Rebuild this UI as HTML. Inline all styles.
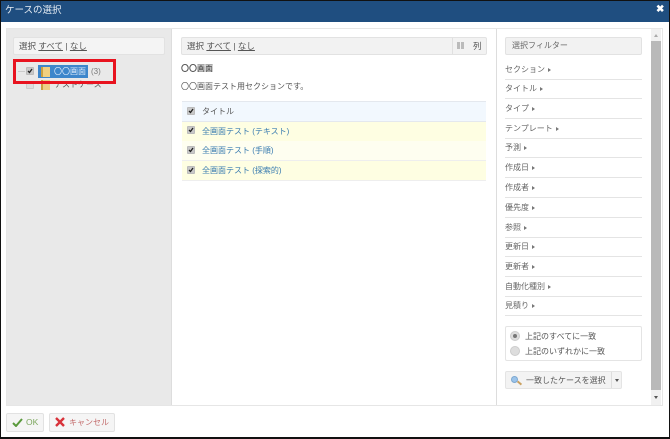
<!DOCTYPE html>
<html><head><meta charset="utf-8"><style>
*{box-sizing:border-box}
html,body{margin:0;padding:0;width:670px;height:439px;overflow:hidden;background:#fff}
body{font-family:"Liberation Sans","Noto Sans CJK JP",sans-serif;font-size:8px;color:#555;position:relative}
.a{position:absolute;white-space:nowrap}
.u{text-decoration:underline}
.bar{position:absolute;background:#f2f2f2;border:1px solid #e2e2e2;border-radius:2px;height:18px;line-height:16px;padding-left:5px;font-size:8.5px}
.cb{position:absolute;width:8px;height:8px;background:#c8c8c8;border:1px solid #bbb;border-radius:1px}
.cb svg{position:absolute;left:0;top:0;display:block}
.row{position:absolute;left:182px;width:304px;height:20px;border-bottom:1px solid #eee;line-height:20px;padding-left:20px}
.row .cb{left:5px;top:5px}
.lk{color:#3a7cb0}
.f{position:absolute;left:505px;width:137px;height:20px;border-bottom:1px solid #e4e4e4;line-height:19px;color:#666}
.f i{display:inline-block;width:0;height:0;border-left:3px solid #777;border-top:2.5px solid transparent;border-bottom:2.5px solid transparent;margin-left:3px;vertical-align:0}
</style></head><body>
<div class="a" style="left:0;top:0;width:670px;height:22px;background:#1f4e80"></div>
<div class="a" style="left:5px;top:4px;color:#e6edf4;font-size:9.5px;line-height:13px">ケースの選択</div>
<div class="a" style="left:656px;top:3px;color:#fff;font-size:10px;font-weight:bold;line-height:13px">✖</div>

<div class="a" style="left:6px;top:28px;width:657px;height:378px;border:1px solid #e6e6e6;background:#fff"></div>
<div class="a" style="left:7px;top:29px;width:165px;height:376px;background:#e9e9e9;border-right:1px solid #ddd"></div>
<div class="a" style="left:496px;top:29px;width:1px;height:376px;background:#ddd"></div>

<div class="bar" style="left:13px;top:37px;width:152px;background:#f4f4f4">選択 <span class="u">すべて</span> | <span class="u">なし</span></div>
<div class="a" style="left:18px;top:71px;width:7px;height:1px;background:#ccc"></div>
<div class="cb" style="left:26px;top:67px"><svg width="6" height="6" viewBox="0 0 6 6"><path d="M1 3l1.5 1.5L5 1" stroke="#222" stroke-width="1.3" fill="none"/></svg></div>
<div class="cb" style="left:26px;top:81px;background:#ddd;border-color:#ccc"></div>
<div class="a" style="left:38px;top:65px;width:50px;height:13px;background:#3d86cb"></div>
<div class="a" style="left:41px;top:67px;width:9px;height:10px;background:#f0d080;border-left:2px solid #caa040"></div>
<div class="a" style="left:54px;top:65px;color:#dbeafa;line-height:14px">〇〇画面</div>
<div class="a" style="left:91px;top:65px;color:#777;line-height:14px">(3)</div>
<div class="a" style="left:41px;top:80px;width:9px;height:10px;background:#edcf85;border-left:2px solid #caa040"></div>
<div class="a" style="left:54px;top:78px;line-height:14px">テストケース</div>
<div class="a" style="left:13px;top:59px;width:103px;height:25px;border:3px solid #e8131f"></div>

<div class="bar" style="left:181px;top:37px;width:306px">選択 <span class="u">すべて</span> | <span class="u">なし</span></div>
<div class="a" style="left:452px;top:38px;width:1px;height:16px;background:#e0e0e0"></div>
<div class="a" style="left:457px;top:42px;width:7px;height:7px;background:repeating-linear-gradient(90deg,#bbb 0 3px,#f2f2f2 3px 4px)"></div>
<div class="a" style="left:473px;top:38px;line-height:16px;font-size:8.5px">列</div>
<div class="a" style="left:181px;top:62px;line-height:14px;font-weight:bold;color:#555">〇〇画面</div>
<div class="a" style="left:181px;top:80px;line-height:14px">〇〇画面テスト用セクションです。</div>

<div class="row" style="top:101px;background:#f2f8fe;border-top:1px solid #e4e8ee;border-bottom:1px solid #e4e8ee;height:21px"><span class="cb"><svg width="6" height="6" viewBox="0 0 6 6"><path d="M1 3l1.5 1.5L5 1" stroke="#222" stroke-width="1.3" fill="none"/></svg></span>タイトル</div>
<div class="row lk" style="top:122px;background:#fefee2"><span class="cb" style="top:4px"><svg width="6" height="6" viewBox="0 0 6 6"><path d="M1 3l1.5 1.5L5 1" stroke="#222" stroke-width="1.3" fill="none"/></svg></span>全画面テスト (テキスト)</div>
<div class="row lk" style="top:141px;background:#fefef0"><span class="cb"><svg width="6" height="6" viewBox="0 0 6 6"><path d="M1 3l1.5 1.5L5 1" stroke="#222" stroke-width="1.3" fill="none"/></svg></span>全画面テスト (手順)</div>
<div class="row lk" style="top:161px;background:#fefee2"><span class="cb"><svg width="6" height="6" viewBox="0 0 6 6"><path d="M1 3l1.5 1.5L5 1" stroke="#222" stroke-width="1.3" fill="none"/></svg></span>全画面テスト (探索的)</div>

<div class="bar" style="left:505px;top:37px;width:137px;padding-left:6px;color:#666;font-size:8px">選択フィルター</div>
<div class="f" style="top:60px">セクション<i></i></div>
<div class="f" style="top:79px">タイトル<i></i></div>
<div class="f" style="top:99px">タイプ<i></i></div>
<div class="f" style="top:119px">テンプレート<i></i></div>
<div class="f" style="top:138px">予測<i></i></div>
<div class="f" style="top:158px">作成日<i></i></div>
<div class="f" style="top:178px">作成者<i></i></div>
<div class="f" style="top:198px">優先度<i></i></div>
<div class="f" style="top:218px">参照<i></i></div>
<div class="f" style="top:237px">更新日<i></i></div>
<div class="f" style="top:257px">更新者<i></i></div>
<div class="f" style="top:277px">自動化種別<i></i></div>
<div class="f" style="top:296px">見積り<i></i></div>

<div class="a" style="left:505px;top:326px;width:137px;height:35px;border:1px solid #e4e4e4;border-radius:2px"></div>
<div class="a" style="left:511px;top:332px;width:8px;height:8px;border-radius:50%;background:#777;border:2px solid #ddd;box-shadow:0 0 0 1px #ccc"></div>
<div class="a" style="left:511px;top:347px;width:8px;height:8px;border-radius:50%;background:#ddd;box-shadow:0 0 0 1px #ccc"></div>
<div class="a" style="left:525px;top:330px;line-height:13px">上記のすべてに一致</div>
<div class="a" style="left:525px;top:345px;line-height:13px">上記のいずれかに一致</div>

<div class="a" style="left:505px;top:371px;width:117px;height:18px;background:#f3f3f3;border:1px solid #e4e4e4;border-radius:2px"></div>
<div class="a" style="left:611px;top:372px;width:1px;height:16px;background:#ddd"></div>
<div class="a" style="left:511px;top:376px;width:7px;height:7px;border-radius:50%;background:#9cc4ea;border:1px solid #7da8d0"></div>
<div class="a" style="left:517px;top:382px;width:5px;height:2px;background:#c9a060;transform:rotate(40deg)"></div>
<div class="a" style="left:526px;top:374px;line-height:14px;color:#555">一致したケースを選択</div>
<div class="a" style="left:615px;top:379px;width:0;height:0;border-top:3px solid #555;border-left:2.5px solid transparent;border-right:2.5px solid transparent"></div>

<div class="a" style="left:651px;top:29px;width:10px;height:376px;background:#f1f1f1"></div>
<div class="a" style="left:651px;top:41px;width:10px;height:349px;background:#b9b9b9"></div>
<div class="a" style="left:654px;top:34px;width:0;height:0;border-bottom:3px solid #aaa;border-left:2.5px solid transparent;border-right:2.5px solid transparent"></div>
<div class="a" style="left:654px;top:396px;width:0;height:0;border-top:3px solid #555;border-left:2.5px solid transparent;border-right:2.5px solid transparent"></div>

<div class="a" style="left:6px;top:413px;width:38px;height:19px;background:#f5f5f5;border:1px solid #e2e2e2;border-radius:2px"></div>
<svg class="a" style="left:12px;top:418px" width="11" height="9" viewBox="0 0 11 9"><path d="M1 5l3 3 6-7" fill="none" stroke="#5a9a3c" stroke-width="2"/></svg>
<div class="a" style="left:26px;top:416px;line-height:13px;color:#7ea860;font-size:8.5px">OK</div>
<div class="a" style="left:49px;top:413px;width:66px;height:19px;background:#f5f5f5;border:1px solid #e2e2e2;border-radius:2px"></div>
<svg class="a" style="left:55px;top:417px" width="10" height="10" viewBox="0 0 10 10"><path d="M1 1l8 8M9 1l-8 8" fill="none" stroke="#d8323a" stroke-width="2.4"/></svg>
<div class="a" style="left:69px;top:416px;line-height:14px;color:#c26a6a">キャンセル</div>

<div class="a" style="left:0;top:0;width:1px;height:439px;background:#111"></div>
<div class="a" style="left:669px;top:0;width:1px;height:439px;background:#111"></div>
<div class="a" style="left:0;top:0;width:670px;height:1px;background:#111"></div>
<div class="a" style="left:0;top:437px;width:670px;height:2px;background:#111"></div>
</body></html>
